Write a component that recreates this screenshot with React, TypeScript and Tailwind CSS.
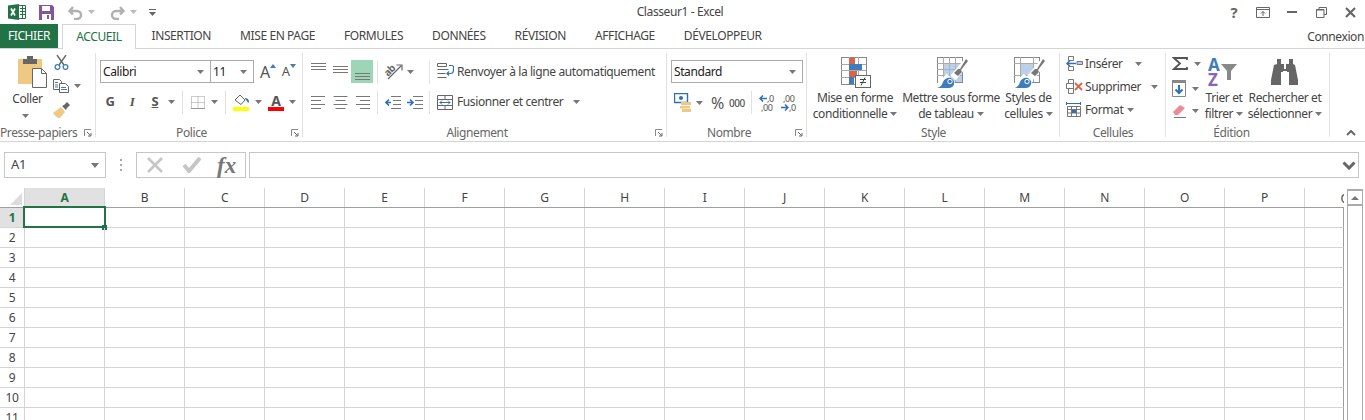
import type { ReactNode } from "react";

const columns = ["A", "B", "C", "D", "E", "F", "G", "H", "I", "J", "K", "L", "M", "N", "O", "P"];
const rows = [1, 2, 3, 4, 5, 6, 7, 8, 9, 10, 11];
const tabs = ["INSERTION", "MISE EN PAGE", "FORMULES", "DONNÉES", "RÉVISION", "AFFICHAGE", "DÉVELOPPEUR"];

function Caret({ className = "" }: { className?: string }) {
  return (
    <svg width="7" height="4" viewBox="0 0 7 4" className={className}>
      <path d="M0 0h7L3.5 4z" fill="#777" />
    </svg>
  );
}

function Launcher() {
  return (
    <svg width="8" height="8" viewBox="0 0 8 8" className="absolute right-[4px] top-[4px]">
      <path d="M.5 7V.5H7" fill="none" stroke="#888" />
      <path d="M3 3l3.5 3.5M7 4v3H4" fill="none" stroke="#666" />
    </svg>
  );
}

function Sep({ className = "" }: { className?: string }) {
  return <div className={`h-[23px] w-px bg-[#e1e1e1] ${className}`} />;
}

function Group({
  label,
  className,
  labelClass = "",
  launcher = true,
  children,
}: {
  label: string;
  className: string;
  labelClass?: string;
  launcher?: boolean;
  children: ReactNode;
}) {
  return (
    <div className={`relative flex h-[87px] shrink-0 flex-col ${className}`}>
      <div className="absolute bottom-[3px] right-0 top-0 w-px bg-[#e1e1e1]" />
      <div className="h-[72px]">{children}</div>
      <div className={`relative h-[15px] whitespace-nowrap text-center text-[12px] leading-[15px] text-[#666] ${labelClass}`}>
        {label}
        {launcher && <Launcher />}
      </div>
    </div>
  );
}

function SelectBox({ text, className }: { text: string; className: string }) {
  return (
    <div className={`flex h-[23px] items-center justify-between border border-[#ababab] pl-[2px] pr-[6px] text-[12px] text-[#222] ${className}`}>
      {text}
      <Caret />
    </div>
  );
}

function Lines({ kind }: { kind: "top" | "middle" | "bottom" | "left" | "center" | "right" }) {
  const w = [14, 10, 14, 10];
  const ys: Record<string, number[]> = {
    top: [1, 4, 7],
    middle: [4, 7, 10],
    bottom: [7, 10, 13],
  };
  if (ys[kind]) {
    return (
      <svg width="15" height="15" viewBox="0 0 15 15">
        {ys[kind].map((y) => (
          <path key={y} d={`M0 ${y + 0.5}h15`} stroke="#777" />
        ))}
      </svg>
    );
  }
  return (
    <svg width="15" height="13" viewBox="0 0 15 13">
      {w.map((len, i) => {
        const x = kind === "left" ? 0 : kind === "center" ? (15 - len) / 2 : 15 - len;
        return <path key={i} d={`M${x} ${i * 4 + 0.5}h${len}`} stroke="#777" />;
      })}
    </svg>
  );
}

function Indent({ flip }: { flip?: boolean }) {
  return (
    <svg width="16" height="13" viewBox="0 0 16 13">
      <path d="M6 .5h10M8 4.500h8M8 8.500h8M6 12.500h10" stroke="#777" />
      {flip ? (
        <path d="M0 6.500h5M3 3.500l3 3-3 3" fill="none" stroke="#2f6fb5" strokeWidth="1.6" />
      ) : (
        <path d="M6 6.500H1M4 3.500l-3 3 3 3" fill="none" stroke="#2f6fb5" strokeWidth="1.6" />
      )}
    </svg>
  );
}

function Grid3({ w, h, cols, rowsN }: { w: number; h: number; cols: number[]; rowsN: number[] }) {
  return (
    <>
      <rect x="0.5" y="0.5" width={w} height={h} fill="#fff" stroke="#888" />
      {cols.map((x) => (
        <path key={`c${x}`} d={`M${x + 0.5} 0v${h}`} stroke="#aaa" />
      ))}
      {rowsN.map((y) => (
        <path key={`r${y}`} d={`M0 ${y + 0.5}h${w}`} stroke="#aaa" />
      ))}
    </>
  );
}

function Brush() {
  return (
    <>
      <path d="M31 3L16 21" stroke="#fff" strokeWidth="7" />
      <path d="M4 31L14 21" stroke="#fff" strokeWidth="12" />
      <path d="M29 2l2 2-7 9 1 2-4 4-4-3 4-4 2 0z" fill="#777" />
      <path d="M0 31c4-1 5-3 6-6 1-3 5-5 8-4l3 3c1 3-1 7-5 7z" fill="#3f7cbd" />
      <circle cx="13" cy="24.500" r="2.200" fill="none" stroke="#fff" />
    </>
  );
}

function DecimalIcon({ inc }: { inc?: boolean }) {
  const arrow = (
    <svg width="8" height="7" viewBox="0 0 8 7" className="shrink-0">
      {inc ? (
        <path d="M8 3.500H1M4 .5l-3 3 3 3" fill="none" stroke="#2f6fb5" strokeWidth="1.5" />
      ) : (
        <path d="M0 3.500h7M4 .5l3 3-3 3" fill="none" stroke="#2f6fb5" strokeWidth="1.5" />
      )}
    </svg>
  );
  return (
    <div className="flex w-[15px] flex-col text-[9px] leading-[9px] text-[#555]">
      {inc ? (
        <>
          <div className="flex items-center">{arrow}<span>,0</span></div>
          <div className="pl-[2px]">,00</div>
        </>
      ) : (
        <>
          <div className="pl-[2px]">,00</div>
          <div className="flex items-center">{arrow}<span>,0</span></div>
        </>
      )}
    </div>
  );
}

function Big({ icon, one, two, className }: { icon: ReactNode; one: string; two: string; className: string }) {
  return (
    <div className={`flex shrink-0 flex-col items-center text-[12px] leading-[16px] text-[#444] ${className}`}>
      <div className="flex h-[37px] w-full items-start justify-center pt-[4px]">{icon}</div>
      <div className="whitespace-nowrap">{one}</div>
      <div className="flex items-center gap-[3px] whitespace-nowrap">
        {two}
        <Caret />
      </div>
    </div>
  );
}

function TitleBar() {
  return (
    <div className="relative flex h-[24px] items-center text-[#666]">
      <svg width="18" height="16" viewBox="0 0 18 16" className="ml-[8px]">
        <path d="M0 1.500L11 0v16L0 14.500z" fill="#217346" />
        <path d="M3 4.500l4 7M7 4.500l-4 7" stroke="#fff" strokeWidth="1.7" />
        <path d="M11 1.500h6.500v13H11" fill="#fff" stroke="#217346" />
        <path d="M12 4.500h5M12 7.500h5M12 10.500h5M14.500 2v12" stroke="#217346" />
      </svg>
      <svg width="15" height="15" viewBox="0 0 15 15" className="ml-[13px]">
        <path d="M0 0h13l2 2v13H0z" fill="#80569f" />
        <path d="M3 1h8v5H3z" fill="#fff" />
        <path d="M3 9h9v6H3z" fill="#fff" />
        <path d="M8 10h2v4H8z" fill="#80569f" />
      </svg>
      <svg width="15" height="15" viewBox="0 0 15 15" className="ml-[14px]">
        <path d="M5 2L1.500 6 5 9.500M2 6h7a4 4 0 0 1 0 8H6" fill="none" stroke="#b0b0b0" strokeWidth="2.4" />
      </svg>
      <Caret className="ml-[5px] opacity-50" />
      <svg width="15" height="15" viewBox="0 0 15 15" className="ml-[15px] -scale-x-100">
        <path d="M5 2L1.500 6 5 9.500M2 6h7a4 4 0 0 1 0 8H6" fill="none" stroke="#b0b0b0" strokeWidth="2.4" />
      </svg>
      <Caret className="ml-[5px] opacity-50" />
      <svg width="7" height="7" viewBox="0 0 7 7" className="ml-[12px]">
        <path d="M0 .5h7" stroke="#666" />
        <path d="M0 3h7L3.500 7z" fill="#666" />
      </svg>
      <div className="pointer-events-none absolute inset-x-0 top-0 pr-[5px] text-center text-[12px] leading-[24px] text-[#444]">Classeur1 - Excel</div>
      <div className="ml-auto flex items-center">
        <span className="w-[12px] text-center text-[15px] font-bold leading-none">?</span>
        <svg width="14" height="11" viewBox="0 0 14 11" className="ml-[16px]">
          <path d="M.5.500h13v10H.5z" fill="none" stroke="#666" />
          <path d="M0 2.500h14" stroke="#666" />
          <path d="M7 9V4.500M5 6.500l2-2 2 2" fill="none" stroke="#666" />
        </svg>
        <div className="ml-[17px] h-[2px] w-[10px] bg-[#666]" />
        <svg width="11" height="11" viewBox="0 0 11 11" className="ml-[19px]">
          <path d="M3 2.500V.5h7.500v7H8M.5 2.500h7.500v8H.5z" fill="none" stroke="#666" />
          <path d="M0 3h8" stroke="#666" />
        </svg>
        <svg width="11" height="11" viewBox="0 0 11 11" className="ml-[18px] mr-[9px]">
          <path d="M1 1l9 9M10 1l-9 9" stroke="#666" strokeWidth="2.2" />
        </svg>
      </div>
    </div>
  );
}

function Tabs() {
  return (
    <div className="flex h-[25px] border-b border-[#d4d4d4] text-[12px] text-[#444]">
      <div className="flex h-[24px] w-[58px] items-center justify-center bg-[#217346] text-white">FICHIER</div>
      <div className="ml-[4px] flex h-[25px] w-[74px] items-center justify-center border border-b-0 border-[#d4d4d4] bg-white text-[#217346]">ACCUEIL</div>
      <div className="ml-[1px] flex">
        {tabs.map((t) => (
          <div key={t} className="flex h-[24px] items-center whitespace-nowrap px-[14.5px]">{t}</div>
        ))}
      </div>
      <div className="ml-auto flex h-[24px] items-center pr-[1px] pt-[2px]">Connexion</div>
    </div>
  );
}

function Ribbon() {
  return (
    <div className="flex h-[93px] border-b border-[#d4d4d4] pt-[4px]">
      <Group label="Presse-papiers" className="w-[96px]" labelClass="pr-[19px]">
        <div className="flex">
          <div className="flex w-[53px] flex-col items-center pl-[6px] text-[12px] leading-[16px] text-[#444]">
            <svg width="29" height="32" viewBox="0 0 29 32" className="ml-[5px] mt-[3px]">
              <path d="M0 3h24v25H0z" fill="#efc983" />
              <path d="M5 3h14v5H5zM9 0h6v3H9z" fill="#666" />
              <path d="M14.500 12.500h9l5 5v14h-14z" fill="#fff" stroke="#666" />
              <path d="M23.500 12.500v5h5" fill="none" stroke="#666" />
            </svg>
            <div className="ml-[-4px] mt-[3px]">Coller</div>
            <Caret className="ml-[-8px] mt-[7px]" />
          </div>
          <div className="flex flex-col pt-[2px]">
            <svg width="15" height="15" viewBox="0 0 15 15" className="ml-[1px]">
              <path d="M3 0l7 10M12 0L5 10" stroke="#666" strokeWidth="1.4" />
              <circle cx="3.500" cy="12" r="2.400" fill="none" stroke="#3f7cbd" strokeWidth="1.300" />
              <circle cx="11.500" cy="12" r="2.400" fill="none" stroke="#3f7cbd" strokeWidth="1.300" />
            </svg>
            <div className="mt-[9px] flex items-center">
              <svg width="16" height="14" viewBox="0 0 16 14">
                <path d="M.5.500h6l2 2v8H.5z" fill="#fff" stroke="#666" />
                <path d="M6.500 4.500h6l3 3v6h-9z" fill="#fff" stroke="#666" />
                <path d="M2 3.500h3M2 6h3M2 8h3M8 8.500h5M8 10.500h6" stroke="#3f7cbd" />
              </svg>
              <Caret className="ml-[5px]" />
            </div>
            <svg width="17" height="16" viewBox="0 0 17 16" className="mt-[9px]">
              <path d="M0 11l8-6 4 5-5 6c-3 0-5-2-7-5z" fill="#efc983" />
              <path d="M9 4l2-1 3-3 3 3-3 3-1 2z" fill="#666" />
            </svg>
          </div>
        </div>
      </Group>

      <Group label="Police" className="w-[207px]" labelClass="pr-[16px]">
        <div className="ml-[4px] mt-[7px] flex items-start">
          <SelectBox text="Calibri" className="w-[111px]" />
          <SelectBox text="11" className="-ml-px w-[44px]" />
          <div className="ml-[6px] flex h-[23px] items-center text-[#555]">
            <span className="text-[16px] leading-none">A</span>
            <svg width="6" height="4" viewBox="0 0 6 4" className="mb-[12px]"><path d="M0 4l3-4 3 4z" fill="#3f7cbd" /></svg>
            <span className="ml-[6px] text-[13px] leading-none">A</span>
            <svg width="6" height="4" viewBox="0 0 6 4" className="mb-[12px]"><path d="M0 0h6L3 4z" fill="#3f7cbd" /></svg>
          </div>
        </div>
        <div className="ml-[8px] mt-[7px] flex h-[24px] items-center text-[#555]">
          <span className="w-[12px] text-center text-[13px] font-bold">G</span>
          <span className="ml-[10px] w-[12px] text-center text-[13px] font-bold italic [font-family:'Liberation_Serif',serif]">I</span>
          <span className="ml-[11px] w-[12px] text-center text-[13px] font-bold underline">S</span>
          <Caret className="ml-[7px]" />
          <Sep className="ml-[7px]" />
          <svg width="14" height="13" viewBox="0 0 14 13" className="ml-[8px]">
            <path d="M.5.500h13v12H.5zM7 .5v12M.5 6.500h13" fill="none" stroke="#999" strokeDasharray="1 1" />
            <path d="M0 12.500h14" stroke="#999" />
          </svg>
          <Caret className="ml-[6px]" />
          <Sep className="ml-[7px]" />
          <svg width="17" height="17" viewBox="0 0 17 17" className="ml-[7px]">
            <path d="M2 6l5-5 5 5-4 4.500z" fill="#fff" stroke="#666" />
            <path d="M12 4c2 0 4 1 4 4l-1 1-1-2c-1-1-2-2-2-3z" fill="#2f6fb5" />
            <path d="M0 13h16v4H0z" fill="#ffff00" />
          </svg>
          <Caret className="ml-[5px]" />
          <div className="ml-[6px] flex w-[16px] flex-col items-center">
            <span className="text-[14px] font-bold leading-[13px] text-[#555]">A</span>
            <div className="h-[4px] w-[16px] bg-[#ff0000]" />
          </div>
          <Caret className="ml-[5px]" />
        </div>
      </Group>

      <Group label="Alignement" className="w-[364px]" labelClass="pr-[16px]">
        <div className="ml-[8px] flex items-start pt-[4px]">
          <div className="flex w-[22px] pt-[5px]"><Lines kind="top" /></div>
          <div className="flex w-[18px] pt-[5px]"><Lines kind="middle" /></div>
          <div className="mt-[3px] flex h-[23px] w-[22px] justify-center bg-[#9fd5b7] pt-[6px]"><Lines kind="bottom" /></div>
          <Sep className="ml-[4px] mt-[4px]" />
          <svg width="18" height="17" viewBox="0 0 18 17" className="ml-[7px] mt-[6px] overflow-visible">
            <text transform="rotate(-45 5 9)" x="0" y="11" fontSize="10" fontWeight="700" fill="#666" fontFamily="Noto Sans">ab</text>
            <path d="M3 16L16 3M11.500 2H17v5.500" fill="none" stroke="#666" strokeWidth="1.200" />
          </svg>
          <Caret className="ml-[4px] mt-[13px]" />
          <Sep className="ml-[15px] mt-[4px]" />
          <svg width="17" height="15" viewBox="0 0 17 15" className="ml-[7px] mt-[6px]">
            <path d="M.5.500h9v3h-9zM.5 6.500h11M.5 10.500h8M.5 14.500h9" fill="none" stroke="#666" />
            <path d="M12 2.500h3c1 0 1.500 1 1.500 2v3c0 2-1 3-3 3H10M12 8.500l-2 2 2 2" fill="none" stroke="#2f6fb5" strokeWidth="1.200" />
          </svg>
          <span className="ml-[3px] mt-[3px] whitespace-nowrap text-[12px] leading-[24px] text-[#444]">Renvoyer à la ligne automatiquement</span>
        </div>
        <div className="ml-[8px] mt-[5px] flex h-[26px] items-center">
          <div className="w-[22px]"><Lines kind="left" /></div>
          <div className="w-[22px]"><Lines kind="center" /></div>
          <div className="w-[18px]"><Lines kind="right" /></div>
          <Sep className="ml-[4px]" />
          <div className="ml-[7px]"><Indent /></div>
          <div className="ml-[6px]"><Indent flip /></div>
          <Sep className="ml-[6px]" />
          <svg width="16" height="15" viewBox="0 0 16 15" className="ml-[7px]">
            <path d="M.5.500h15v14H.5zM0 4.500h16M0 10.500h16M8 .5v4M8 10.500v4" fill="none" stroke="#666" />
            <path d="M3 7.500h10M5 5.500l-2 2 2 2M11 5.500l2 2-2 2" fill="none" stroke="#2f6fb5" />
          </svg>
          <span className="ml-[4px] whitespace-nowrap text-[12px] text-[#444]">Fusionner et centrer</span>
          <Caret className="ml-[10px]" />
        </div>
      </Group>

      <Group label="Nombre" className="w-[140px]" labelClass="pr-[16px]">
        <div className="ml-[4px] mt-[7px]">
          <SelectBox text="Standard" className="w-[132px]" />
        </div>
        <div className="ml-[7px] mt-[8px] flex h-[23px] items-center">
          <svg width="18" height="19" viewBox="0 0 18 19">
            <path d="M.5.500h13v9H.5z" fill="#fff" stroke="#2f6fb5" strokeWidth="1.400" />
            <circle cx="7" cy="5" r="2" fill="#2f6fb5" />
            <path d="M7 9h10v3H7zM6 13h10v2.500H6zM8 16h9v3H8z" fill="#efc983" />
          </svg>
          <Caret className="ml-[4px]" />
          <span className="ml-[8px] text-[16px] leading-none text-[#555]">%</span>
          <span className="ml-[5px] text-[10px] font-medium leading-none text-[#555]">000</span>
          <Sep className="ml-[6px]" />
          <div className="ml-[7px]"><DecimalIcon inc /></div>
          <div className="ml-[7px]"><DecimalIcon /></div>
        </div>
      </Group>

      <Group label="Style" className="w-[253px]" launcher={false}>
        <div className="flex">
          <Big
            className="w-[96px]"
            one="Mise en forme"
            two="conditionnelle"
            icon={
              <svg width="30" height="31" viewBox="0 0 30 31" className="ml-[1px]">
                <Grid3 w={25} h={27} cols={[8, 17]} rowsN={[7, 13, 20]} />
                <path d="M8 1h6v6H8zM8 14h8v6H8z" fill="#d8654a" />
                <path d="M8 7h13v6H8zM8 20h5v7H8z" fill="#3f7cbd" />
                <rect x="14.500" y="18.500" width="15" height="12" fill="#fff" stroke="#666" />
                <path d="M19 22.500h6M19 25.500h6M24 20.500l-4 8" stroke="#444" />
              </svg>
            }
          />
          <Big
            className="w-[96px]"
            one="Mettre sous forme"
            two="de tableau"
            icon={
              <svg width="31" height="31" viewBox="0 0 31 31" className="ml-[2px]">
                <Grid3 w={25} h={25} cols={[6, 12, 18]} rowsN={[6, 12, 18]} />
                <path d="M7 7h18v18H7z" fill="#bdd0e6" />
                <path d="M7 12.500h18M7 18.500h18M12.500 7v18M18.500 7v18" stroke="#9fb4cd" />
                <Brush />
              </svg>
            }
          />
          <Big
            className="w-[59px]"
            one="Styles de"
            two="cellules"
            icon={
              <svg width="31" height="31" viewBox="0 0 31 31" className="ml-[2px]">
                <Grid3 w={25} h={25} cols={[6, 19]} rowsN={[6, 18]} />
                <path d="M7 7h12v11H7z" fill="#bdd0e6" />
                <Brush />
              </svg>
            }
          />
        </div>
      </Group>

      <Group label="Cellules" className="w-[106px]" launcher={false}>
        <div className="flex flex-col gap-[2px] pl-[6px] text-[12px] text-[#444]">
          <div className="flex h-[21px] items-center">
            <svg width="17" height="15" viewBox="0 0 17 15">
              <path d="M2.500.500h5v4h-5zM2.500 10.500h5v4h-5z" fill="none" stroke="#777" />
              <path d="M11 5.500h5.500v3H11z" fill="#bcd0e8" stroke="#777" />
              <path d="M10 7.500H1M4 4.500l-3 3 3 3" fill="none" stroke="#2f6fb5" strokeWidth="1.500" />
            </svg>
            <span className="ml-[2px]">Insérer</span>
            <Caret className="ml-[12px]" />
          </div>
          <div className="flex h-[21px] items-center">
            <svg width="17" height="15" viewBox="0 0 17 15">
              <path d="M2.500.500h5v4h-5zM.5 4.500h7v5h-7zM2.500 9.500h5v5h-5z" fill="none" stroke="#777" />
              <path d="M9 4l7 7M16 4l-7 7" stroke="#d8654a" strokeWidth="1.800" />
            </svg>
            <span className="ml-[2px]">Supprimer</span>
            <Caret className="ml-[10px]" />
          </div>
          <div className="flex h-[21px] items-center">
            <svg width="16" height="15" viewBox="0 0 16 15">
              <path d="M0 1.500h15M.5 0v3M14.500 0v3" stroke="#2f6fb5" />
              <path d="M1.500 4.500h13v10h-13zM1.500 7.500h13M1.500 11h13M5.500 4.500v10M10.500 4.500v10" fill="none" stroke="#777" />
              <path d="M6 8h4v3H6z" fill="#2f6fb5" />
            </svg>
            <span className="ml-[3px]">Format</span>
            <Caret className="ml-[4px]" />
          </div>
        </div>
      </Group>

      <Group label="Édition" className="w-[164px]" launcher={false} labelClass="pr-[33px]">
        <div className="flex">
          <div className="flex w-[36px] flex-col pl-[6px] pt-[4px]">
            <div className="flex items-center">
              <svg width="16" height="13" viewBox="0 0 16 13">
                <path d="M15 3V1H2l6 5.500L2 12h13v-2" fill="none" stroke="#555" strokeWidth="1.800" />
              </svg>
              <Caret className="ml-[6px]" />
            </div>
            <div className="mt-[10px] flex items-center">
              <svg width="14" height="17" viewBox="0 0 14 17">
                <path d="M.5.500h13v16H.5z" fill="#fff" stroke="#888" />
                <path d="M0 0h14v3H0z" fill="#888" />
                <path d="M7 5v8M3.500 9.500L7 13l3.500-3.500" fill="none" stroke="#2f6fb5" strokeWidth="2" />
              </svg>
              <Caret className="ml-[6px]" />
            </div>
            <div className="mt-[6px] flex items-center">
              <svg width="15" height="15" viewBox="0 0 15 15">
                <path d="M1 9l7-7 5 3-7 7H3z" fill="#ec8a95" />
                <path d="M2 14.500h12" stroke="#777" />
              </svg>
              <Caret className="ml-[5px]" />
            </div>
          </div>
          <Big
            className="w-[44px]"
            one="Trier et"
            two="filtrer"
            icon={
              <div className="flex h-[32px] w-[32px] font-bold">
                <div className="flex flex-col text-[17px] leading-[15px]">
                  <span className="text-[#3f7cbd]">A</span>
                  <span className="text-[#8e63b0]">Z</span>
                </div>
                <svg width="16" height="16" viewBox="0 0 16 16" className="ml-[2px] mt-[7px]">
                  <path d="M0 0h16l-6 7v9H6V7z" fill="#888" />
                </svg>
              </div>
            }
          />
          <Big
            className="w-[78px]"
            one="Rechercher et"
            two="sélectionner"
            icon={
              <svg width="28" height="26" viewBox="0 0 28 26" className="mt-[2px]">
                <path d="M6 0h4v5h3v5h2V5h3V0h4v5l2 1 3 15v5H18V13h-2v-1h-4v1h-2v13H0v-5L3 6l3-1z" fill="#666" />
              </svg>
            }
          />
        </div>
      </Group>

      <div className="flex h-[87px] flex-1 items-end justify-end pb-[4px] pr-[9px]">
        <svg width="10" height="6" viewBox="0 0 10 6">
          <path d="M1 5l4-4 4 4" fill="none" stroke="#666" strokeWidth="2" />
        </svg>
      </div>
    </div>
  );
}

function FormulaBar() {
  return (
    <div className="mt-[10px] flex h-[26px] pl-[4px] pr-[6px] text-[#444]">
      <div className="flex w-[102px] items-center justify-between border border-[#c6c6c6] px-[6px] text-[13px]">
        A1
        <svg width="8" height="5" viewBox="0 0 8 5"><path d="M0 0h8L4 5z" fill="#777" /></svg>
      </div>
      <div className="flex w-[30px] flex-col items-center justify-center gap-[3px]">
        <div className="h-[2px] w-[2px] bg-[#aaa]" />
        <div className="h-[2px] w-[2px] bg-[#aaa]" />
        <div className="h-[2px] w-[2px] bg-[#aaa]" />
      </div>
      <div className="flex w-[110px] items-center border border-[#c6c6c6] pl-[9px]">
        <svg width="18" height="16" viewBox="0 0 18 16">
          <path d="M2 1l14 14M16 1L2 15" stroke="#c6c6c6" strokeWidth="2.600" />
        </svg>
        <svg width="20" height="16" viewBox="0 0 20 16" className="ml-[18px]">
          <path d="M2 8l5 6 11-13" fill="none" stroke="#c6c6c6" strokeWidth="4" />
        </svg>
        <span className="ml-[15px] text-[23px] font-bold italic leading-none tracking-normal text-[#777] [font-family:'Liberation_Serif',serif]">fx</span>
      </div>
      <div className="ml-[3px] flex flex-1 items-center justify-end border border-[#c6c6c6] pr-[2px]">
        <svg width="14" height="9" viewBox="0 0 14 9">
          <path d="M1.500 1.500L7 7l5.500-5.500" fill="none" stroke="#666" strokeWidth="3" />
        </svg>
      </div>
    </div>
  );
}

function Sheet() {
  return (
    <div className="mt-[10px] flex text-[12px] text-[#444]">
      <div className="w-[1344px] shrink-0">
        <div className="flex h-[20px] border-b border-[#9f9f9f]">
          <div className="flex w-[25px] items-end justify-end border-r border-[#d4d4d4] pb-[2px] pr-[2px]">
            <svg width="12" height="12" viewBox="0 0 12 12"><path d="M12 0v12H0z" fill="#dcdcdc" /></svg>
          </div>
          {columns.map((c, i) => (
            <div
              key={c}
              className={`flex w-[80px] items-center justify-center border-r border-[#d4d4d4] pt-[1px] ${i === 0 ? "bg-[#e1e1e1] font-bold text-[#217346]" : ""}`}
            >
              {c}
            </div>
          ))}
          <div className="w-[39px] overflow-hidden">
            <div className="w-[80px] pt-[1px] text-center leading-[19px]">Q</div>
          </div>
        </div>
        {rows.map((r) => (
          <div key={r} className="flex h-[20px] border-b border-r border-b-[#d4d4d4] border-r-[#9f9f9f]">
            <div className={`flex w-[25px] items-center justify-center border-r border-[#d4d4d4] pt-[1px] ${r === 1 ? "bg-[#e1e1e1] font-bold text-[#217346]" : ""}`}>
              {r}
            </div>
            {columns.map((c) => (
              <div key={c} className="relative w-[80px] border-r border-[#d4d4d4]">
                {r === 1 && c === "A" && (
                  <div className="absolute -left-[2px] -top-[2px] h-[22px] w-[83px] border-2 border-[#217346]">
                    <div className="absolute -bottom-[4px] -right-[3px] h-[5px] w-[5px] bg-[#217346]" />
                  </div>
                )}
              </div>
            ))}
          </div>
        ))}
      </div>
      <div className="ml-[3px] mt-[1px] w-[16px] border-x border-[#ababab]">
        <div className="flex h-[17px] items-center justify-center border-y-2 border-[#ababab]">
          <svg width="8" height="4" viewBox="0 0 8 4"><path d="M0 4l4-4 4 4z" fill="#777" /></svg>
        </div>
      </div>
    </div>
  );
}

export default function App() {
  return (
    <div className="h-[420px] w-[1365px] overflow-hidden bg-white tracking-[-0.4px] [font-family:'Noto_Sans',sans-serif]">
      <TitleBar />
      <Tabs />
      <Ribbon />
      <FormulaBar />
      <Sheet />
    </div>
  );
}
